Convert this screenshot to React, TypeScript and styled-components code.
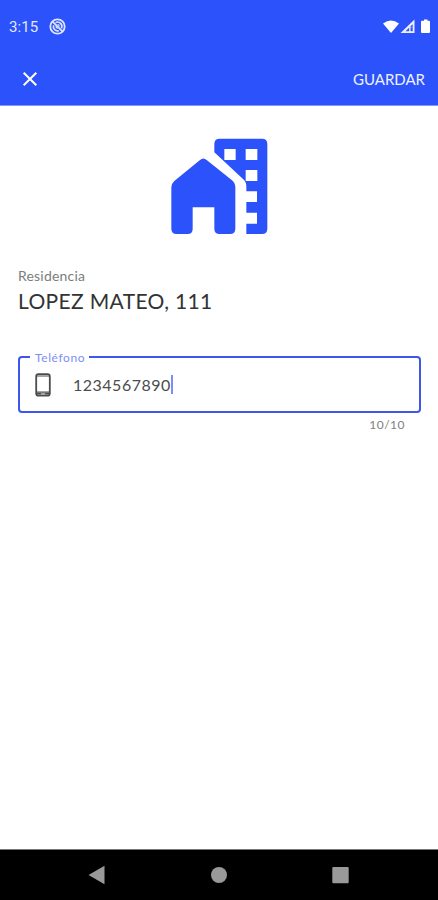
import React from "react";
import styled, { createGlobalStyle } from "styled-components";

const BLUE = "#2b52fb";

const GlobalStyle = createGlobalStyle`
  * { box-sizing: border-box; }
  body { margin: 0; background: #fff; font-family: Lato, sans-serif; }
`;

const Screen = styled.div`
  display: flex;
  flex-direction: column;
  width: 100%;
  height: 900px;
  background: #fff;
`;

const Header = styled.header`
  flex: none;
  height: 106px;
  background: ${BLUE};
  color: #fff;
  border-bottom: 1px solid #8195fc;
`;

const StatusBar = styled.div`
  display: flex;
  align-items: center;
  height: 53px;
  padding: 0 7px 0 9px;
`;

const Clock = styled.span`
  font: 400 15px/20px Roboto, sans-serif;
  letter-spacing: 0.1px;
  width: 40px;
  color: #e4e9ff;
`;

const StatusIcons = styled.div`
  display: flex;
  margin-left: auto;
`;

const AppBar = styled.div`
  display: flex;
  align-items: center;
  justify-content: space-between;
  height: 52px;
  padding: 0 13px 0 22px;
`;

const IconButton = styled.button`
  display: flex;
  padding: 0;
  border: 0;
  background: none;
`;

const SaveButton = styled.button`
  padding: 0;
  border: 0;
  background: none;
  color: #eef1ff;
  font: 400 15px/20px Lato, sans-serif;
`;

const Content = styled.main`
  flex: 1;
  display: flex;
  flex-direction: column;
  padding: 32px 17px 0 18px;
`;

const Hero = styled.div`
  display: flex;
  justify-content: center;
  height: 98px;
  padding-right: 1px;
`;

const Caption = styled.div`
  margin-top: 31px;
  font-size: 14px;
  line-height: 18px;
  letter-spacing: 0.2px;
  color: #7c7c7c;
`;

const Address = styled.div`
  margin-top: 2px;
  font-size: 21px;
  line-height: 28px;
  letter-spacing: 0.35px;
  color: #333;
`;

const Field = styled.fieldset`
  margin: 35px 0 0;
  min-width: 0;
  height: 63px;
  padding: 0 15px;
  border: 2px solid #3f56ee;
  border-radius: 4px;
`;

const Legend = styled.legend`
  margin-left: -5px;
  padding: 2px 4px 0 5px;
  font-size: 12px;
  line-height: 12px;
  letter-spacing: 0.6px;
  color: #7c8ef5;
`;

const InputRow = styled.div`
  display: flex;
  align-items: center;
  height: 41px;
`;

const PhoneValue = styled.span`
  margin-left: 22px;
  font-size: 16px;
  line-height: 20px;
  letter-spacing: 0.5px;
  color: #4c4c4c;
`;

const Caret = styled.span`
  width: 2px;
  height: 19px;
  background: #7d8cf8;
`;

const Counter = styled.div`
  align-self: flex-end;
  margin: 3px 16px 0 0;
  font-size: 12px;
  line-height: 17px;
  letter-spacing: 0.5px;
  color: #808080;
`;

const NavBar = styled.nav`
  flex: none;
  display: flex;
  align-items: center;
  justify-content: space-between;
  height: 51px;
  padding: 0 89px 0 88px;
  background: #000;
  border-top: 1px solid #777;
`;

const CastOffIcon = () => (
  <svg width="17" height="17" viewBox="0 0 17 17" fill="none" stroke="#dfe5ff">
    <circle cx="8.5" cy="8.5" r="7.2" strokeWidth="1.8" />
    <path d="M4.6 7.2a4.3 4.3 0 0 0 5.2 5.5M6.6 4.6a4.3 4.3 0 0 1 5.8 5.8" strokeWidth="1.6" />
    <path d="M3.6 3.6l9.8 9.8" strokeWidth="1.8" />
    <path d="M7 8.2a1.8 1.8 0 0 0 1.8 2M8.5 6.7a1.8 1.8 0 0 1 1.8 1.8" strokeWidth="1.2" />
  </svg>
);

const SignalIcons = () => (
  <svg width="50" height="16" viewBox="0 0 50 16" fill="#fff">
    <path d="M2 4.5Q10 -1.7 18 4.5L10 14Z" />
    <path d="M33.5 .5V14H19.5ZM31.7 5.2L24.5 12.2H28.3V8.6H31.7Z" fillRule="evenodd" opacity=".9" />
    <path d="M28.3 8.6V12.2H31.7V8.6Z" fill={BLUE} />
    <path d="M28.3 7.5V13H29.5V7.5Z" />
    <path d="M43 .5h3.5v1.3h1.5q1 0 1 1V13q0 1-1 1h-7q-1 0-1-1V2.8q0-1 1-1h2Z" />
  </svg>
);

const CloseIcon = () => (
  <svg width="16" height="16" viewBox="0 0 16 16" fill="none" stroke="#fff" strokeWidth="2">
    <path d="M1.7 1.7L14.3 14.3M14.3 1.7L1.7 14.3" />
  </svg>
);

const ResidenceIcon = () => (
  <svg width="97" height="97" viewBox="33 25 291 291" fill={BLUE}>
    <path d="M120 91Q130 82 140 91L215 151Q226 160 226 173V297Q226 313 210 313H179Q163 313 163 298V233H98V298Q98 313 83 313H50Q34 313 34 297V173Q34 162 43 154Z" />
    <path
      fillRule="evenodd"
      d="M163 43Q163 27 179 27H306Q322 27 322 43V297Q322 313 306 313H259V282H291V249H259V217H291V185H259V169Q259 157 249 148L163 68ZM193 58V91H227V58ZM257 58V91H292V58ZM257 121V154H292V121Z"
    />
  </svg>
);

const PhoneIcon = () => (
  <svg width="16" height="24" viewBox="0 0 16 24" fill="none" stroke="#4c4c4c">
    <rect x="1.2" y="1.2" width="13.6" height="21.4" rx="2.2" strokeWidth="1.8" />
    <path d="M1 3h14M1 19.2h14" strokeWidth="1.2" />
    <path d="M2 20h12v1.6H2z" fill="#4c4c4c" stroke="none" />
    <path d="M6 20.9h4" stroke="#ddd" strokeWidth="1" />
  </svg>
);

const BackIcon = () => (
  <svg width="17" height="20" viewBox="0 0 17 20" fill="#999">
    <path d="M.5 10L16.5 .8V19.2Z" />
  </svg>
);

const HomeIcon = () => (
  <svg width="17" height="17" viewBox="0 0 17 17" fill="#999">
    <circle cx="9" cy="8" r="8" />
  </svg>
);

const RecentsIcon = () => (
  <svg width="17" height="17" viewBox="0 0 17 17" fill="#999">
    <rect x=".3" y="0" width="16.4" height="16.2" rx="1" />
  </svg>
);

export default function App() {
  return (
    <Screen>
      <GlobalStyle />
      <Header>
        <StatusBar>
          <Clock>3:15</Clock>
          <CastOffIcon />
          <StatusIcons>
            <SignalIcons />
          </StatusIcons>
        </StatusBar>
        <AppBar>
          <IconButton aria-label="Cerrar">
            <CloseIcon />
          </IconButton>
          <SaveButton>GUARDAR</SaveButton>
        </AppBar>
      </Header>
      <Content>
        <Hero>
          <ResidenceIcon />
        </Hero>
        <Caption>Residencia</Caption>
        <Address>LOPEZ MATEO, 111</Address>
        <Field>
          <Legend>Teléfono</Legend>
          <InputRow>
            <PhoneIcon />
            <PhoneValue>1234567890</PhoneValue>
            <Caret />
          </InputRow>
        </Field>
        <Counter>10/10</Counter>
      </Content>
      <NavBar>
        <BackIcon />
        <HomeIcon />
        <RecentsIcon />
      </NavBar>
    </Screen>
  );
}
